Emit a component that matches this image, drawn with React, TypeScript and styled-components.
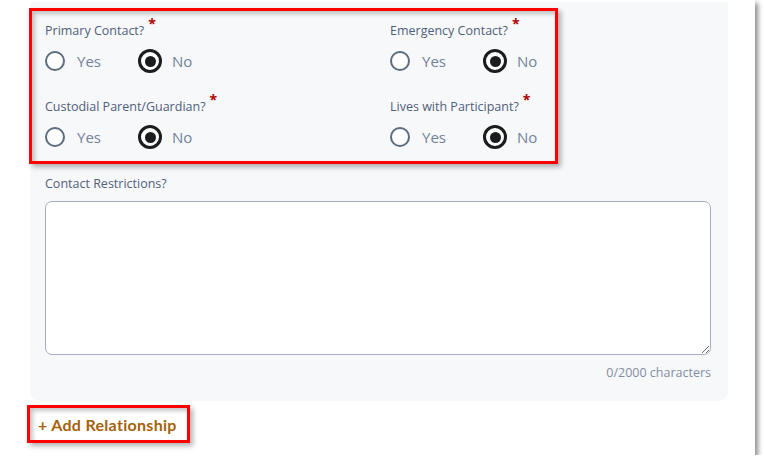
import React from "react";
import styled, { createGlobalStyle } from "styled-components";

const GlobalStyle = createGlobalStyle`
  html, body { margin: 0; padding: 0; background: #ffffff; }
  * { box-sizing: border-box; }
`;

const Page = styled.div`
  width: 755px;
  height: 455px;
  background: #ffffff;
  box-shadow: 3px 3px 5px rgba(0, 0, 0, 0.45);
  padding: 2px 27px 0 30px;
  font-family: "Open Sans", "Liberation Sans", sans-serif;
`;

const Panel = styled.div`
  background: #f7f8fa;
  border-radius: 0 0 9px 9px;
  padding: 6px 16px 20px 15px;
  display: flex;
  flex-direction: column;
`;

const Highlight = styled.div<{ $w: number }>`
  width: ${(p) => p.$w}px;
  border: 3px solid #ff0000;
  box-shadow: 3px 3px 5px rgba(0, 0, 0, 0.3), inset 3px 3px 4px rgba(0, 0, 0, 0.22);
`;

const QuestionBox = styled(Highlight)`
  margin-left: -16px;
  padding: 10px 0 12px 13px;
  display: grid;
  grid-template-columns: 345px 1fr;
  row-gap: 24px;
`;

const Field = styled.div`
  display: flex;
  flex-direction: column;
  gap: 9px;
`;

const Label = styled.div`
  font-size: 12.5px;
  line-height: 18px;
  font-weight: 500;
  color: #50607a;
  white-space: nowrap;
`;

const Req = styled.span`
  color: #b00000;
  font-weight: 700;
  font-size: 14px;
  position: relative;
  top: -6px;
  margin-left: 4px;
`;

const RadioGroup = styled.div`
  display: grid;
  grid-template-columns: 95px auto;
  margin-left: -2px;
  height: 24px;
`;

const Option = styled.label`
  display: flex;
  align-items: center;
  gap: 10px;
  font-size: 15px;
  font-weight: 400;
  color: #72839a;
`;

const RadioBox = styled.span`
  width: 24px;
  height: 24px;
  display: flex;
  align-items: center;
  justify-content: center;
`;

const Circle = styled.span<{ $on: boolean }>`
  border-radius: 50%;
  background: #ffffff;
  display: flex;
  align-items: center;
  justify-content: center;
  width: ${(p) => (p.$on ? 24 : 20)}px;
  height: ${(p) => (p.$on ? 24 : 20)}px;
  border: ${(p) => (p.$on ? "3px solid #1b1c1e" : "2px solid #5d6c7f")};
`;

const Dot = styled.span`
  width: 11px;
  height: 11px;
  border-radius: 50%;
  background: #1b1c1e;
`;

const PlainLabel = styled(Label)`
  margin-top: 11px;
`;

const TextArea = styled.textarea`
  margin-top: 8px;
  width: 666px;
  height: 154px;
  border: 1px solid #a3b0c0;
  border-radius: 7px;
  background: #ffffff;
  resize: vertical;
  font-family: inherit;
  padding: 8px;
  outline: none;
`;

const Counter = styled.div`
  margin-top: 9px;
  width: 666px;
  text-align: right;
  font-size: 12.5px;
  line-height: 17px;
  color: #7f8ea3;
`;

const AddBox = styled(Highlight)`
  margin: 4px 0 0 -3px;
  height: 38px;
  padding: 0 0 0 8px;
  display: flex;
  align-items: center;
`;

const AddLink = styled.a`
  font-family: Lato, "Open Sans", sans-serif;
  font-weight: 700;
  font-size: 16px;
  letter-spacing: 0.3px;
  color: #a5620b;
  text-decoration: none;
  white-space: nowrap;
`;

type Q = { label: string };
const questions: Q[] = [
  { label: "Primary Contact?" },
  { label: "Emergency Contact?" },
  { label: "Custodial Parent/Guardian?" },
  { label: "Lives with Participant?" },
];

function Radio({ on, text }: { on: boolean; text: string }) {
  return (
    <Option>
      <RadioBox>
        <Circle $on={on}>{on && <Dot />}</Circle>
      </RadioBox>
      {text}
    </Option>
  );
}

export default function App() {
  return (
    <>
      <GlobalStyle />
      <Page>
        <Panel>
          <QuestionBox $w={529}>
            {questions.map((q) => (
              <Field key={q.label}>
                <Label>
                  {q.label}
                  <Req>*</Req>
                </Label>
                <RadioGroup>
                  <Radio on={false} text="Yes" />
                  <Radio on={true} text="No" />
                </RadioGroup>
              </Field>
            ))}
          </QuestionBox>
          <PlainLabel>Contact Restrictions?</PlainLabel>
          <TextArea />
          <Counter>0/2000 characters</Counter>
        </Panel>
        <AddBox $w={163}>
          <AddLink href="#">+ Add Relationship</AddLink>
        </AddBox>
      </Page>
    </>
  );
}
